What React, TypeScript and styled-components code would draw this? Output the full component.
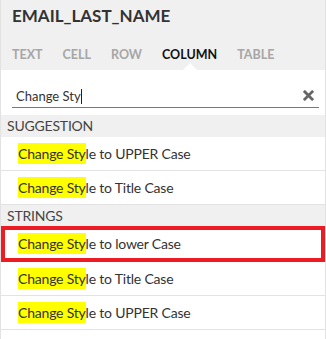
import * as React from 'react'
import styled, { createGlobalStyle } from 'styled-components'

const Global = createGlobalStyle`
  html, body {
    margin: 0;
    padding: 0;
    background: #fff;
  }
  body {
    font-family: Lato, "Open Sans", sans-serif;
  }
`

const Panel = styled.div`
  width: 326px;
  height: 339px;
  box-sizing: border-box;
  border-left: 1px solid #e2e2e2;
  border-right: 1px solid #e2e2e2;
  background: #fff;
  overflow: hidden;
`

const Header = styled.div`
  background: #f0f0f0;
  padding: 0 11px;
`

const Title = styled.div`
  height: 40px;
  line-height: 32px;
  font-size: 17px;
  font-weight: 700;
  color: #333;
`

const Tabs = styled.div`
  display: flex;
  gap: 20px;
  height: 30px;
  align-items: center;
`

const Tab = styled.div<{ $active?: boolean }>`
  position: relative;
  font-size: 12.5px;
  font-weight: 700;
  color: ${p => (p.$active ? '#111' : '#a6a6a6')};
  height: 30px;
  line-height: 30px;

  &::after {
    content: '';
    display: ${p => (p.$active ? 'block' : 'none')};
    position: absolute;
    left: 50%;
    bottom: 0;
    margin-left: -7px;
    border: 7px solid transparent;
    border-bottom-color: #fff;
    border-top: 0;
  }
`

const SearchArea = styled.div`
  padding: 14px 6px 7px 11px;
`

const SearchBox = styled.div`
  display: flex;
  align-items: center;
  height: 23px;
  border-bottom: 1px solid #4a7fd0;
  padding-left: 4px;
`

const SearchText = styled.span`
  flex: 1;
  font-size: 13px;
  color: #333;
`

const Caret = styled.span`
  display: inline-block;
  width: 1px;
  height: 15px;
  background: #222;
  vertical-align: -3px;
`

const Clear = styled.svg`
  width: 11px;
  height: 11px;
  margin-right: 5px;
`

const SectionTitle = styled.div`
  background: #f0f0f0;
  height: 22px;
  line-height: 22px;
  padding-left: 6px;
  font-size: 14px;
  letter-spacing: -0.2px;
  color: #444;
`

const Item = styled.div<{ $selected?: boolean }>`
  height: 34px;
  line-height: 34px;
  padding-left: 17px;
  font-size: 14px;
  letter-spacing: -0.2px;
  color: #333;
  border-bottom: 1px solid #e3e3e3;
  box-sizing: border-box;
  ${p => p.$selected && `
    height: 36px;
    line-height: 28px;
    padding-left: 13px;
    border: 4px solid #ed1c24;
    margin-top: -1px;
  `}
`

const Mark = styled.span`
  background: #ffff00;
  padding: 2px 0;
`

const ItemRow = ({ text, selected }: { text: string; selected?: boolean }) => (
  <Item $selected={selected}>
    <Mark>Change Sty</Mark>
    {text}
  </Item>
)

export default function App() {
  return (
    <Panel>
      <Global />
      <Header>
        <Title>EMAIL_LAST_NAME</Title>
        <Tabs>
          <Tab>TEXT</Tab>
          <Tab>CELL</Tab>
          <Tab>ROW</Tab>
          <Tab $active>COLUMN</Tab>
          <Tab>TABLE</Tab>
        </Tabs>
      </Header>
      <SearchArea>
        <SearchBox>
          <SearchText>
            Change Sty<Caret />
          </SearchText>
          <Clear viewBox="0 0 12 12">
            <path d="M2 2 L10 10 M10 2 L2 10" stroke="#666" strokeWidth="3" strokeLinecap="square" />
          </Clear>
        </SearchBox>
      </SearchArea>
      <SectionTitle>SUGGESTION</SectionTitle>
      <ItemRow text="le to UPPER Case" />
      <ItemRow text="le to Title Case" />
      <SectionTitle>STRINGS</SectionTitle>
      <ItemRow text="le to lower Case" selected />
      <ItemRow text="le to Title Case" />
      <ItemRow text="le to UPPER Case" />
    </Panel>
  )
}
